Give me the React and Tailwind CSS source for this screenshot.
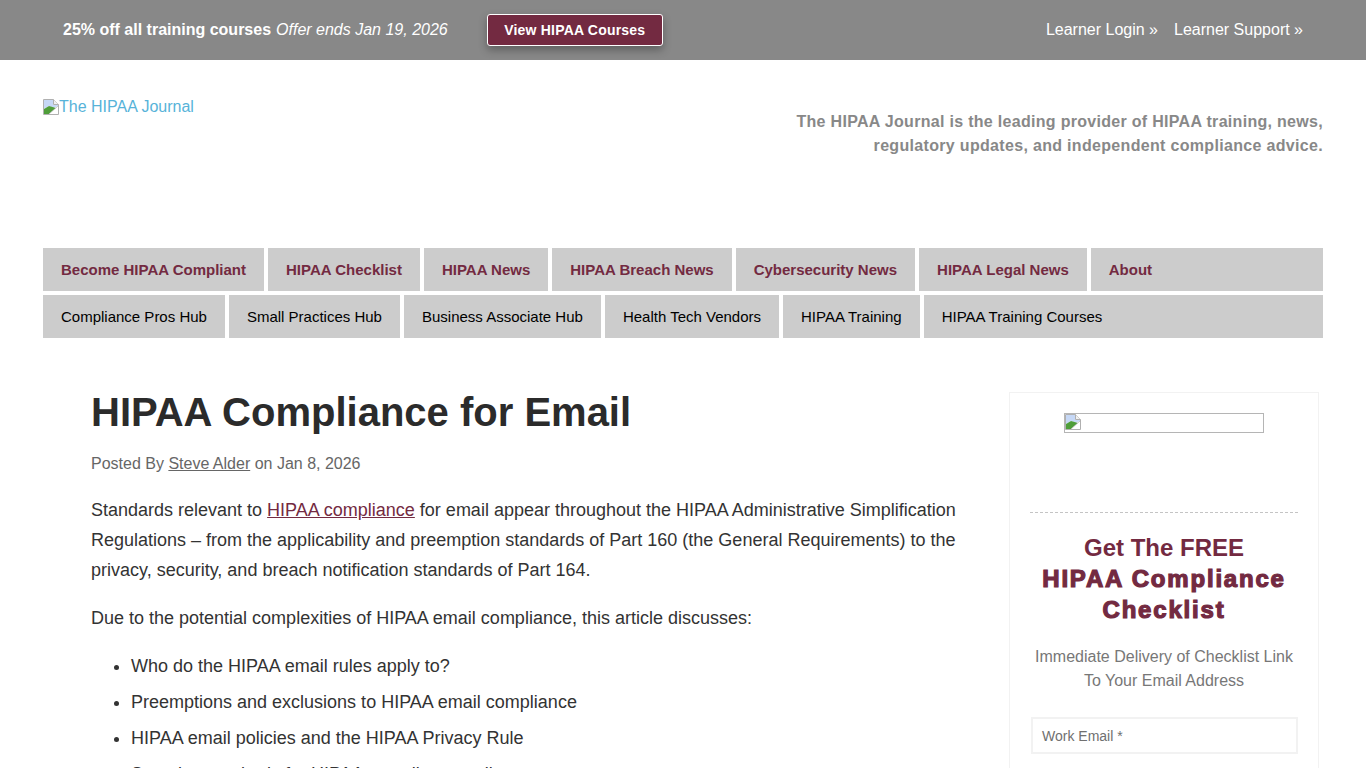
const BrokenImage = () => (
  <svg width="16" height="16" viewBox="0 0 16 16" className="shrink-0 block">
    <path d="M0.5 0.5H10.5L15.5 5.5V15.5H0.5Z" fill="#fff" stroke="#b0b0b0" />
    <path d="M10.5 0.5V5.5H15.5" fill="#f0f0f0" stroke="#b0b0b0" />
    <path d="M1 1H10V6H15V7L10 9L6 7L1 10Z" fill="#c6d8f6" />
    <path d="M1 15V10L6 7L13 9L6 15Z" fill="#4f9e3a" />
    <path d="M6 15L13 9L15 7V15Z" fill="#fff" />
    <path d="M6 15L15 7" stroke="#b0b0b0" strokeWidth="0.7" />
  </svg>
);

const row1 = ["Become HIPAA Compliant", "HIPAA Checklist", "HIPAA News", "HIPAA Breach News", "Cybersecurity News", "HIPAA Legal News", "About"];
const row2 = ["Compliance Pros Hub", "Small Practices Hub", "Business Associate Hub", "Health Tech Vendors", "HIPAA Training", "HIPAA Training Courses"];

function NavRow({ items, bold }) {
  return (
    <div className="flex gap-1">
      {items.map((t, i) => (
        <a
          key={t}
          className={
            "h-[43px] flex items-center px-[18px] bg-[#cccccc] text-[15px] leading-none " +
            (bold ? "font-bold text-[#732a41] " : "text-black ") +
            (i === items.length - 1 ? "grow" : "")
          }
        >
          {t}
        </a>
      ))}
    </div>
  );
}

export default function App() {
  return (
    <div className="h-[768px] overflow-hidden bg-white font-['Liberation_Sans',Arial,sans-serif] text-[#333333]">
      <div className="h-[60px] bg-[#888888] flex items-center pl-[63px] pr-[63px] text-white text-base">
        <span className="font-bold">25% off all training courses</span>
        <span className="italic ml-[5px]">Offer ends Jan 19, 2026</span>
        <a className="ml-[39px] w-[176px] h-8 flex items-center justify-center rounded-[3px] border border-white bg-[#732a41] text-sm font-bold tracking-[0.2px] shadow-[0_4px_8px_rgba(0,0,0,0.3)]">
          View HIPAA Courses
        </a>
        <div className="ml-auto flex gap-4">
          <span>Learner Login »</span>
          <span>Learner Support »</span>
        </div>
      </div>

      <header className="h-[188px] px-[43px] flex justify-between">
        <a className="mt-[35px] h-[20px] flex items-start text-base text-[#57b3d9]">
          <span className="mt-[4px]"><BrokenImage /></span>
          <span>The HIPAA Journal</span>
        </a>
        <p className="mt-[50px] text-right text-base leading-6 font-bold text-[#888888] tracking-[0.3px]">
          The HIPAA Journal is the leading provider of HIPAA training, news,
          <br />
          <span className="tracking-[0.32px]">regulatory updates, and independent compliance advice.</span>
        </p>
      </header>

      <nav className="px-[43px] flex flex-col gap-1">
        <NavRow items={row1} bold />
        <NavRow items={row2} />
      </nav>

      <main className="mt-[54px] pl-[91px] pr-[47px] flex justify-between items-start">
        <article className="w-[866px]">
          <h1 className="text-[40px] leading-[40px] font-bold text-[#2b2b2b] mt-0">HIPAA Compliance for Email</h1>
          <p className="mt-[20px] text-base leading-6 text-[#666666]">
            Posted By <a className="underline">Steve Alder</a> on Jan 8, 2026
          </p>
          <p className="mt-[19px] text-lg leading-[30px]">
            Standards relevant to <a className="underline text-[#732a41]">HIPAA compliance</a> for email appear throughout the HIPAA Administrative Simplification Regulations – from the applicability and preemption standards of Part 160 (the General Requirements) to the privacy, security, and breach notification standards of Part 164.
          </p>
          <p className="mt-[18px] text-lg leading-[30px]">
            Due to the potential complexities of HIPAA email compliance, this article discusses:
          </p>
          <ul className="mt-[18px] pl-10 list-disc text-lg leading-[30px] flex flex-col gap-1.5">
            <li>Who do the HIPAA email rules apply to?</li>
            <li>Preemptions and exclusions to HIPAA email compliance</li>
            <li>HIPAA email policies and the HIPAA Privacy Rule</li>
            <li>Security standards for HIPAA compliant email</li>
          </ul>
        </article>

        <aside className="w-[310px] h-[500px] shrink-0 border border-[#f2f2f2] px-5 pt-5 text-center">
          <div className="mx-auto w-[200px] h-5 border border-[#b5b5b5] overflow-hidden">
            <BrokenImage />
          </div>
          <div className="mt-[79px] border-t border-dashed border-[#c4c4c4]" />
          <h2 className="mt-[19px] text-2xl leading-[31px] font-bold text-[#732a41]">
            Get The FREE
            <br />
            <span className="tracking-[1.8px] [-webkit-text-stroke:1.2px_#732a41]">HIPAA Compliance Checklist</span>
          </h2>
          <p className="mt-[20px] text-base leading-6 text-[#777777]">
            Immediate Delivery of Checklist Link
            <br />
            To Your Email Address
          </p>
          <div className="mt-[24px] ml-px h-[37px] w-[267px] border-2 border-[#f2f2f2] flex items-center pl-[9px] text-sm text-[#707070]">
            Work Email *
          </div>
        </aside>
      </main>
    </div>
  );
}
